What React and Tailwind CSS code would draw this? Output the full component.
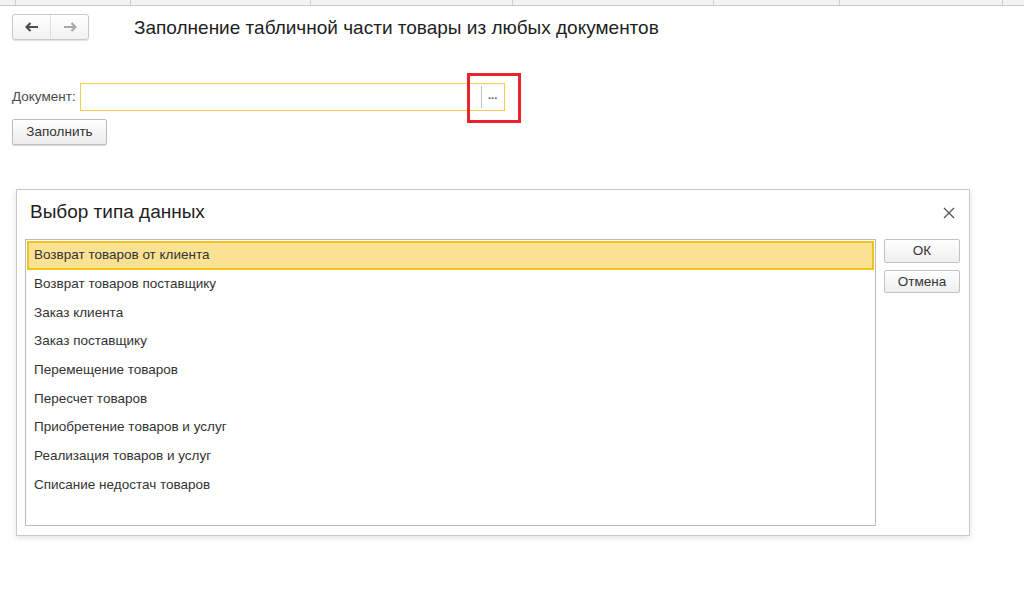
import React from 'react';

const items = [
    'Возврат товаров от клиента',
    'Возврат товаров поставщику',
    'Заказ клиента',
    'Заказ поставщику',
    'Перемещение товаров',
    'Пересчет товаров',
    'Приобретение товаров и услуг',
    'Реализация товаров и услуг',
    'Списание недостач товаров',
];

const tabs = [16, 115, 180, 202, 201, 126, 163, 21];

const App = () => {
    return (
        <div className="w-[1024px] h-[589px] bg-white overflow-hidden font-['Liberation_Sans',Arial,sans-serif] text-[#333]">
            {/* top tab strip */}
            <div className="flex h-[6px] bg-[#f2f2f2] border-b border-[#cacaca]">
                {tabs.map((w, i) => (
                    <div key={i} style={{ width: w }} className="shrink-0 border-r border-[#cfcfcf] last:border-r-0" />
                ))}
            </div>

            {/* header */}
            <div className="flex items-center h-[26px] mt-[8px] pl-[12px]">
                <div className="flex h-[26px] w-[77px] rounded-[3px] border border-[#c9c9c9] bg-gradient-to-b from-white to-[#f1f1f1] shadow-[0_1px_1px_rgba(0,0,0,0.12)]">
                    <div className="flex-1 flex items-center justify-center border-r border-[#dcdcdc]">
                        <svg width="14" height="10" viewBox="0 0 14 10"><path d="M1 5h12M5.5 1L1.5 5l4 4" fill="none" stroke="#4d4d4d" strokeWidth="2.2" /></svg>
                    </div>
                    <div className="flex-1 flex items-center justify-center">
                        <svg width="14" height="10" viewBox="0 0 14 10"><path d="M1 5h12M8.5 1l4 4-4 4" fill="none" stroke="#a8a8a8" strokeWidth="2.2" /></svg>
                    </div>
                </div>
                <div className="ml-[45px] text-[19px] text-[#1e1e1e] leading-none">Заполнение табличной части товары из любых документов</div>
            </div>

            {/* document field */}
            <div className="flex items-center mt-[43px] pl-[12px]">
                <span className="text-[13.5px] text-[#4a4a4a] mr-[4px]">Документ:</span>
                <div className="relative flex items-center w-[425px] h-[28px] border border-[#f5cf4a] bg-white">
                    <div className="flex-1" />
                    <div className="h-[22px] border-l border-[#c5c5c5] w-[23px] flex items-center justify-center text-[11px] font-bold text-[#555] leading-none pb-[3px]">...</div>
                    <div className="absolute left-[386px] top-[-11px] w-[54px] h-[50px] border-[3px] border-[#e9222b]" />
                </div>
            </div>

            <div className="pl-[12px] mt-[8px]">
                <button className="h-[26px] w-[95px] rounded-[2px] border border-[#bdbdbd] bg-gradient-to-b from-white to-[#ececec] shadow-[0_1px_1px_rgba(0,0,0,0.15)] text-[13.5px] text-[#333]">Заполнить</button>
            </div>

            {/* dialog */}
            <div className="ml-[16px] mt-[44px] w-[954px] h-[347px] border border-[#c9c9c9] bg-white shadow-[0_2px_6px_rgba(0,0,0,0.12)] flex flex-col">
                <div className="flex items-center justify-between h-[49px] pl-[13px] pr-[14px]">
                    <span className="text-[19px] text-[#1e1e1e] mb-[4px]">Выбор типа данных</span>
                    <svg className="mb-[4px]" width="12" height="12" viewBox="0 0 12 12"><path d="M1 1l10 10M11 1L1 11" stroke="#555" strokeWidth="1.3" /></svg>
                </div>
                <div className="flex flex-1 pl-[8px] pb-[8px] gap-[8px]">
                    <div className="w-[851px] h-[287px] border border-[#bcbcbc] p-[1px]">
                        {items.map((t, i) => (
                            <div
                                key={t}
                                className={`h-[28.7px] flex items-center pl-[5px] text-[13.5px] text-[#333] ${i === 0 ? 'bg-[#fbe293] border-2 border-[#f2c21c]' : 'border-2 border-transparent'}`}
                            >
                                {t}
                            </div>
                        ))}
                    </div>
                    <div className="flex flex-col gap-[7px]">
                        <button className="h-[24px] w-[76px] rounded-[2px] border border-[#c2c2c2] bg-gradient-to-b from-white to-[#efefef] text-[13.5px] text-[#333]">ОК</button>
                        <button className="h-[23px] w-[76px] rounded-[2px] border border-[#c2c2c2] bg-gradient-to-b from-white to-[#efefef] text-[13.5px] text-[#333]">Отмена</button>
                    </div>
                </div>
            </div>
        </div>
    );
};

export default App;
